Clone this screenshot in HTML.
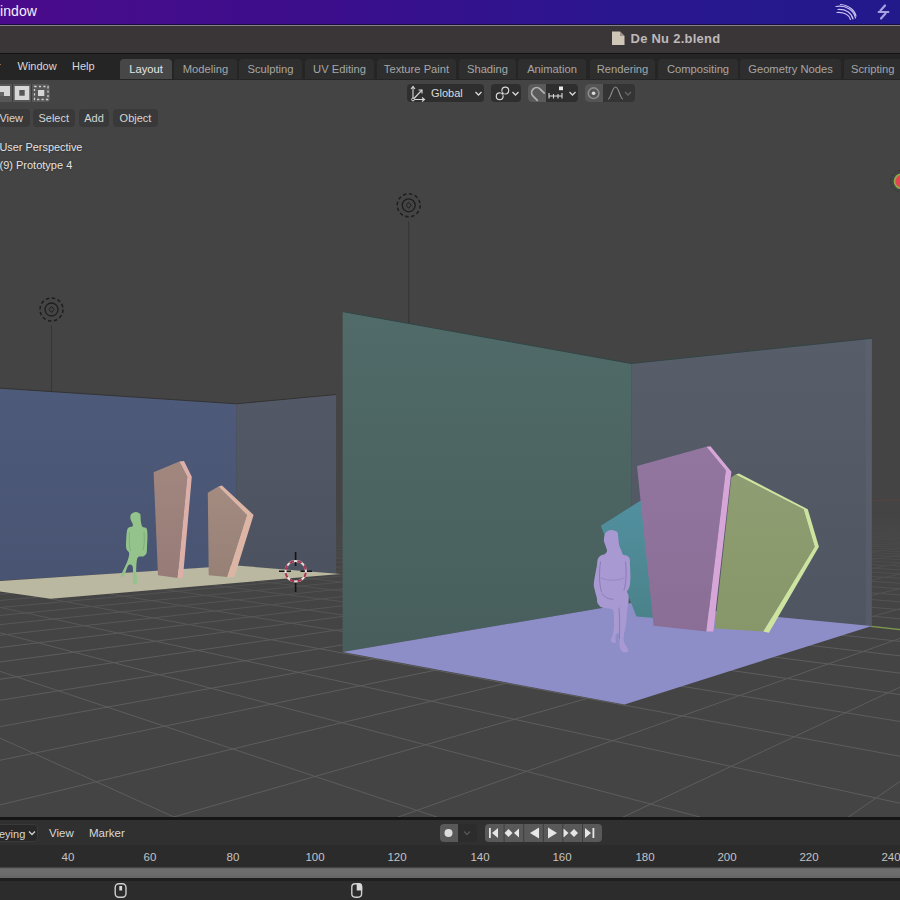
<!DOCTYPE html>
<html><head><meta charset="utf-8"><style>
*{box-sizing:border-box}
body{margin:0;width:900px;height:900px;overflow:hidden;background:#444444;font-family:"Liberation Sans",sans-serif;position:relative;color:#ddd}
.a{position:absolute}
.t{position:absolute;white-space:nowrap;font-size:11px;line-height:14px}
.tab{position:absolute;top:59px;height:20px;background:#2e2e2e;border-radius:4px 4px 0 0;color:#a6a6a6;font-size:11.2px;line-height:21px;text-align:center}
.btn{position:absolute;height:18px;background:#393939;border-radius:4px;color:#d6d6d6;font-size:11px;line-height:18px;text-align:center}
</style></head><body>
<svg class="a" style="left:0;top:0" width="900" height="900" viewBox="0 0 900 900"><defs><linearGradient id="gBlue" x1="0" y1="0" x2="0" y2="1"><stop offset="0" stop-color="#4e5a79"/><stop offset="1" stop-color="#485472"/></linearGradient><linearGradient id="gGrayL" x1="0" y1="0" x2="0" y2="1"><stop offset="0" stop-color="#535867"/><stop offset="1" stop-color="#4d5260"/></linearGradient><linearGradient id="gTeal" x1="0" y1="0" x2="0" y2="1"><stop offset="0" stop-color="#506b69"/><stop offset="1" stop-color="#475e5c"/></linearGradient><linearGradient id="gGrayR" x1="0" y1="0" x2="0" y2="1"><stop offset="0" stop-color="#575d69"/><stop offset="1" stop-color="#4f5561"/></linearGradient><linearGradient id="gS1" x1="0" y1="0" x2="0" y2="1"><stop offset="0" stop-color="#a2877f"/><stop offset="1" stop-color="#977b77"/></linearGradient><linearGradient id="gS2" x1="0" y1="0" x2="0" y2="1"><stop offset="0" stop-color="#a38b80"/><stop offset="1" stop-color="#978076"/></linearGradient><linearGradient id="gTS" x1="0" y1="0" x2="0" y2="1"><stop offset="0" stop-color="#5290a0"/><stop offset="1" stop-color="#4a8289"/></linearGradient><linearGradient id="gPS" x1="0" y1="0" x2="0" y2="1"><stop offset="0" stop-color="#9276a0"/><stop offset="1" stop-color="#8b6e95"/></linearGradient><linearGradient id="gGS" x1="0" y1="0" x2="0" y2="1"><stop offset="0" stop-color="#8f9e72"/><stop offset="1" stop-color="#889769"/></linearGradient></defs><rect x="0" y="54" width="900" height="763" fill="#444444"/><defs><linearGradient id="gf" gradientUnits="userSpaceOnUse" x1="599.9" y1="512.3" x2="600.1" y2="651.4"><stop offset="0" stop-color="#fff" stop-opacity="0"/><stop offset="1" stop-color="#fff" stop-opacity="1"/></linearGradient><mask id="gm"><rect x="0" y="0" width="900" height="900" fill="url(#gf)"/></mask></defs><g stroke="#5d5d5d" stroke-width="1" mask="url(#gm)"><line x1="894.8" y1="507.6" x2="905.0" y2="507.8"/><line x1="877.3" y1="507.6" x2="905.0" y2="508.0"/><line x1="859.8" y1="507.7" x2="905.0" y2="508.3"/><line x1="842.3" y1="507.7" x2="905.0" y2="508.6"/><line x1="824.8" y1="507.7" x2="905.0" y2="508.9"/><line x1="807.3" y1="507.7" x2="905.0" y2="509.2"/><line x1="789.8" y1="507.7" x2="905.0" y2="509.5"/><line x1="772.3" y1="507.8" x2="905.0" y2="509.8"/><line x1="754.9" y1="507.8" x2="905.0" y2="510.2"/><line x1="737.4" y1="507.8" x2="905.0" y2="510.5"/><line x1="719.9" y1="507.8" x2="905.0" y2="510.8"/><line x1="702.4" y1="507.8" x2="905.0" y2="511.2"/><line x1="684.9" y1="507.8" x2="905.0" y2="511.5"/><line x1="667.4" y1="507.9" x2="905.0" y2="511.9"/><line x1="649.9" y1="507.9" x2="905.0" y2="512.3"/><line x1="632.4" y1="507.9" x2="905.0" y2="512.7"/><line x1="614.9" y1="507.9" x2="905.0" y2="513.1"/><line x1="597.4" y1="507.9" x2="905.0" y2="513.5"/><line x1="579.9" y1="507.9" x2="905.0" y2="514.0"/><line x1="562.4" y1="508.0" x2="905.0" y2="514.4"/><line x1="545.0" y1="508.0" x2="905.0" y2="514.9"/><line x1="527.5" y1="508.0" x2="905.0" y2="515.3"/><line x1="510.0" y1="508.0" x2="905.0" y2="515.8"/><line x1="492.5" y1="508.0" x2="905.0" y2="516.3"/><line x1="475.0" y1="508.1" x2="905.0" y2="516.9"/><line x1="457.5" y1="508.1" x2="905.0" y2="517.4"/><line x1="440.0" y1="508.1" x2="905.0" y2="518.0"/><line x1="422.5" y1="508.1" x2="905.0" y2="518.5"/><line x1="405.0" y1="508.1" x2="905.0" y2="519.1"/><line x1="387.5" y1="508.1" x2="905.0" y2="519.8"/><line x1="370.0" y1="508.2" x2="905.0" y2="520.4"/><line x1="352.5" y1="508.2" x2="905.0" y2="521.1"/><line x1="335.1" y1="508.2" x2="905.0" y2="521.8"/><line x1="317.6" y1="508.2" x2="905.0" y2="522.5"/><line x1="300.1" y1="508.2" x2="905.0" y2="523.3"/><line x1="282.6" y1="508.3" x2="905.0" y2="524.1"/><line x1="265.1" y1="508.3" x2="905.0" y2="524.9"/><line x1="247.6" y1="508.3" x2="905.0" y2="525.7"/><line x1="230.1" y1="508.3" x2="905.0" y2="526.6"/><line x1="212.6" y1="508.3" x2="905.0" y2="527.6"/><line x1="195.1" y1="508.3" x2="905.0" y2="528.6"/><line x1="177.6" y1="508.4" x2="905.0" y2="529.6"/><line x1="160.1" y1="508.4" x2="905.0" y2="530.7"/><line x1="142.6" y1="508.4" x2="905.0" y2="531.8"/><line x1="125.2" y1="508.4" x2="905.0" y2="533.0"/><line x1="107.7" y1="508.4" x2="905.0" y2="534.3"/><line x1="90.2" y1="508.4" x2="905.0" y2="535.6"/><line x1="72.7" y1="508.5" x2="905.0" y2="537.0"/><line x1="55.2" y1="508.5" x2="905.0" y2="538.5"/><line x1="37.7" y1="508.5" x2="905.0" y2="540.0"/><line x1="20.2" y1="508.5" x2="905.0" y2="541.7"/><line x1="2.7" y1="508.5" x2="905.0" y2="543.5"/><line x1="-5.0" y1="508.9" x2="905.0" y2="545.3"/><line x1="-5.0" y1="509.7" x2="905.0" y2="547.4"/><line x1="-5.0" y1="510.5" x2="905.0" y2="549.5"/><line x1="-5.0" y1="511.4" x2="905.0" y2="551.8"/><line x1="-5.0" y1="512.3" x2="905.0" y2="554.3"/><line x1="-5.0" y1="513.3" x2="905.0" y2="556.9"/><line x1="-5.0" y1="514.4" x2="905.0" y2="559.8"/><line x1="-5.0" y1="515.6" x2="905.0" y2="563.0"/><line x1="-5.0" y1="516.8" x2="905.0" y2="566.4"/><line x1="-5.0" y1="518.2" x2="905.0" y2="570.1"/><line x1="-5.0" y1="519.8" x2="905.0" y2="574.1"/><line x1="-5.0" y1="521.5" x2="905.0" y2="578.6"/><line x1="-5.0" y1="523.3" x2="905.0" y2="583.6"/><line x1="-5.0" y1="525.4" x2="905.0" y2="589.1"/><line x1="-5.0" y1="527.7" x2="905.0" y2="595.3"/><line x1="-5.0" y1="530.3" x2="905.0" y2="602.2"/><line x1="-5.0" y1="533.3" x2="905.0" y2="610.1"/><line x1="-5.0" y1="536.7" x2="905.0" y2="619.2"/><line x1="-5.0" y1="540.6" x2="905.0" y2="629.6"/><line x1="-5.0" y1="545.2" x2="905.0" y2="641.9"/><line x1="-5.0" y1="550.7" x2="905.0" y2="656.4"/><line x1="-5.0" y1="557.2" x2="905.0" y2="673.8"/><line x1="-5.0" y1="565.3" x2="905.0" y2="695.3"/><line x1="-5.0" y1="575.4" x2="905.0" y2="722.3"/><line x1="-5.0" y1="588.6" x2="905.0" y2="757.2"/><line x1="-5.0" y1="606.3" x2="905.0" y2="804.3"/><line x1="-5.0" y1="631.4" x2="707.5" y2="819.0"/><line x1="-5.0" y1="669.7" x2="442.7" y2="819.0"/><line x1="-5.0" y1="735.8" x2="178.3" y2="819.0"/><line x1="5.5" y1="508.5" x2="-5.0" y2="508.7"/><line x1="20.5" y1="508.5" x2="-5.0" y2="509.0"/><line x1="35.6" y1="508.5" x2="-5.0" y2="509.2"/><line x1="50.6" y1="508.5" x2="-5.0" y2="509.5"/><line x1="65.6" y1="508.5" x2="-5.0" y2="509.8"/><line x1="80.7" y1="508.5" x2="-5.0" y2="510.1"/><line x1="95.7" y1="508.4" x2="-5.0" y2="510.3"/><line x1="110.7" y1="508.4" x2="-5.0" y2="510.6"/><line x1="125.8" y1="508.4" x2="-5.0" y2="510.9"/><line x1="140.8" y1="508.4" x2="-5.0" y2="511.2"/><line x1="155.9" y1="508.4" x2="-5.0" y2="511.6"/><line x1="170.9" y1="508.4" x2="-5.0" y2="511.9"/><line x1="185.9" y1="508.3" x2="-5.0" y2="512.2"/><line x1="201.0" y1="508.3" x2="-5.0" y2="512.6"/><line x1="216.0" y1="508.3" x2="-5.0" y2="512.9"/><line x1="231.0" y1="508.3" x2="-5.0" y2="513.3"/><line x1="246.1" y1="508.3" x2="-5.0" y2="513.7"/><line x1="261.1" y1="508.3" x2="-5.0" y2="514.0"/><line x1="276.1" y1="508.3" x2="-5.0" y2="514.4"/><line x1="291.2" y1="508.2" x2="-5.0" y2="514.8"/><line x1="306.2" y1="508.2" x2="-5.0" y2="515.3"/><line x1="321.2" y1="508.2" x2="-5.0" y2="515.7"/><line x1="336.3" y1="508.2" x2="-5.0" y2="516.1"/><line x1="351.3" y1="508.2" x2="-5.0" y2="516.6"/><line x1="366.4" y1="508.2" x2="-5.0" y2="517.0"/><line x1="381.4" y1="508.2" x2="-5.0" y2="517.5"/><line x1="396.4" y1="508.1" x2="-5.0" y2="518.0"/><line x1="411.5" y1="508.1" x2="-5.0" y2="518.5"/><line x1="426.5" y1="508.1" x2="-5.0" y2="519.1"/><line x1="441.5" y1="508.1" x2="-5.0" y2="519.6"/><line x1="456.6" y1="508.1" x2="-5.0" y2="520.2"/><line x1="471.6" y1="508.1" x2="-5.0" y2="520.8"/><line x1="486.6" y1="508.0" x2="-5.0" y2="521.4"/><line x1="501.7" y1="508.0" x2="-5.0" y2="522.0"/><line x1="516.7" y1="508.0" x2="-5.0" y2="522.7"/><line x1="531.8" y1="508.0" x2="-5.0" y2="523.4"/><line x1="546.8" y1="508.0" x2="-5.0" y2="524.1"/><line x1="561.8" y1="508.0" x2="-5.0" y2="524.8"/><line x1="576.9" y1="508.0" x2="-5.0" y2="525.6"/><line x1="591.9" y1="507.9" x2="-5.0" y2="526.4"/><line x1="606.9" y1="507.9" x2="-5.0" y2="527.2"/><line x1="622.0" y1="507.9" x2="-5.0" y2="528.1"/><line x1="637.0" y1="507.9" x2="-5.0" y2="529.0"/><line x1="652.0" y1="507.9" x2="-5.0" y2="529.9"/><line x1="667.1" y1="507.9" x2="-5.0" y2="530.9"/><line x1="682.1" y1="507.8" x2="-5.0" y2="531.9"/><line x1="697.1" y1="507.8" x2="-5.0" y2="533.0"/><line x1="712.2" y1="507.8" x2="-5.0" y2="534.1"/><line x1="727.2" y1="507.8" x2="-5.0" y2="535.3"/><line x1="742.3" y1="507.8" x2="-5.0" y2="536.6"/><line x1="757.3" y1="507.8" x2="-5.0" y2="537.9"/><line x1="772.3" y1="507.8" x2="-5.0" y2="539.3"/><line x1="787.4" y1="507.7" x2="-5.0" y2="540.7"/><line x1="802.4" y1="507.7" x2="-5.0" y2="542.3"/><line x1="817.4" y1="507.7" x2="-5.0" y2="543.9"/><line x1="832.5" y1="507.7" x2="-5.0" y2="545.7"/><line x1="847.5" y1="507.7" x2="-5.0" y2="547.5"/><line x1="862.5" y1="507.7" x2="-5.0" y2="549.5"/><line x1="877.6" y1="507.6" x2="-5.0" y2="551.5"/><line x1="892.6" y1="507.6" x2="-5.0" y2="553.8"/><line x1="905.0" y1="507.8" x2="-5.0" y2="556.2"/><line x1="905.0" y1="508.6" x2="-5.0" y2="558.7"/><line x1="905.0" y1="509.5" x2="-5.0" y2="561.5"/><line x1="905.0" y1="510.4" x2="-5.0" y2="564.5"/><line x1="905.0" y1="511.4" x2="-5.0" y2="567.7"/><line x1="905.0" y1="512.6" x2="-5.0" y2="571.2"/><line x1="905.0" y1="513.8" x2="-5.0" y2="575.1"/><line x1="905.0" y1="515.1" x2="-5.0" y2="579.3"/><line x1="905.0" y1="516.6" x2="-5.0" y2="583.9"/><line x1="905.0" y1="518.2" x2="-5.0" y2="589.0"/><line x1="905.0" y1="520.0" x2="-5.0" y2="594.6"/><line x1="905.0" y1="522.0" x2="-5.0" y2="600.9"/><line x1="905.0" y1="524.3" x2="-5.0" y2="608.0"/><line x1="905.0" y1="526.8" x2="-5.0" y2="616.0"/><line x1="905.0" y1="529.8" x2="-5.0" y2="625.2"/><line x1="905.0" y1="533.1" x2="-5.0" y2="635.8"/><line x1="905.0" y1="537.0" x2="-5.0" y2="648.1"/><line x1="905.0" y1="541.7" x2="-5.0" y2="662.6"/><line x1="905.0" y1="547.2" x2="-5.0" y2="680.0"/><line x1="905.0" y1="554.0" x2="-5.0" y2="701.1"/><line x1="905.0" y1="562.4" x2="-5.0" y2="727.5"/><line x1="905.0" y1="573.1" x2="-5.0" y2="761.3"/><line x1="905.0" y1="587.4" x2="-5.0" y2="806.1"/><line x1="905.0" y1="607.2" x2="166.8" y2="819.0"/><line x1="905.0" y1="636.6" x2="392.7" y2="819.0"/><line x1="905.0" y1="684.8" x2="618.9" y2="819.0"/><line x1="905.0" y1="778.0" x2="845.5" y2="819.0"/></g><line x1="871" y1="626.3" x2="900" y2="629.6" stroke="#7f9a48" stroke-width="1.2"/><line x1="872" y1="500.5" x2="900" y2="500" stroke="#6a4444" stroke-width="0.8" stroke-opacity="0.6"/><g fill="none" stroke="#1e1e1e"><line x1="408.7" y1="221.3" x2="408.7" y2="328" stroke="#333333" stroke-width="0.9"/><circle cx="408.7" cy="205.3" r="6.5" stroke-width="1.3"/><circle cx="408.7" cy="205.3" r="11.5" stroke-width="1.5" stroke-dasharray="3.5 2.5"/><path d="M408.7 202.3L411.2 205.3L408.7 208.3L406.2 205.3Z" stroke-width="1"/></g><g fill="none" stroke="#1e1e1e"><line x1="51.5" y1="325.5" x2="51.5" y2="395" stroke="#333333" stroke-width="0.9"/><circle cx="51.5" cy="309.5" r="6.5" stroke-width="1.3"/><circle cx="51.5" cy="309.5" r="11.5" stroke-width="1.5" stroke-dasharray="3.5 2.5"/><path d="M51.5 306.5L54.0 309.5L51.5 312.5L49.0 309.5Z" stroke-width="1"/></g><polygon points="-40.0,385.5 236.4,403.8 236.4,566.0 -40.0,583.0" fill="url(#gBlue)" /><polygon points="236.4,403.8 336.0,394.5 336.0,573.5 236.4,566.0" fill="url(#gGrayL)" /><path d="M-40 385.5L236.4 403.8L336 394.5" fill="none" stroke="#333" stroke-width="1"/><polygon points="-40.0,583.5 236.4,565.5 340.5,574.0 50.7,598.7 -40.0,586.0" fill="#bab8a0" /><polygon points="342.7,311.6 631.2,363.5 631.2,603.0 342.6,652.0" fill="url(#gTeal)" /><polygon points="631.2,363.5 871.8,338.3 871.8,626.0 631.2,603.0" fill="url(#gGrayR)" /><rect x="866" y="339" width="5.8" height="287" fill="#636a76" opacity="0.3"/><path d="M342.7 311.6L631.2 363.5L871.8 338.3" fill="none" stroke="#344" stroke-width="1"/><polygon points="342.6,652.0 631.2,603.0 871.8,626.0 624.5,704.4" fill="#8d8ec8" /><polygon points="153.6,472.2 179.3,461.6 187.3,476.7 177.6,578.0 158.0,575.3" fill="url(#gS1)" /><polygon points="179.3,461.6 184.0,461.0 191.8,476.7 182.9,578.0 177.6,578.0 187.3,476.7" fill="#dcb0a8" /><polygon points="207.8,492.7 218.4,486.4 246.9,514.9 227.3,577.1 208.7,575.3" fill="url(#gS2)" /><polygon points="218.4,486.4 222.0,485.5 253.6,514.9 234.4,577.1 227.3,577.1 246.9,514.9" fill="#dcb5a5" /><polygon points="600.9,525.8 640.0,500.9 660.0,500.0 660.0,618.5 636.4,616.4" fill="url(#gTS)" /><polygon points="637.0,466.1 706.4,446.7 725.8,470.3 706.4,631.4 653.6,625.8" fill="url(#gPS)" /><polygon points="706.4,446.7 710.5,446.2 731.4,471.7 713.3,631.4 706.4,631.4 725.8,470.3" fill="#d6a6d8" /><polygon points="731.4,477.2 735.6,474.4 803.6,509.2 814.7,546.7 763.3,631.4 714.7,628.6" fill="url(#gGS)" /><polygon points="735.6,474.4 739.0,473.5 807.8,509.2 818.9,546.7 768.9,632.8 763.3,631.4 814.7,546.7 803.6,509.2" fill="#cde3a0" /><path d="M611.3 530.1C612.7 530.2 615.4 530.8 616.5 531.5C617.6 532.2 617.5 532.1 617.9 534.3C618.3 536.4 618.5 541.7 619.1 544.4C619.7 547.1 620.8 549.0 621.4 550.7C622.0 552.4 622.1 553.7 623.0 554.5C623.9 555.3 625.8 555.1 626.9 555.7C628.0 556.4 629.1 556.8 629.6 558.4C630.1 560.0 629.9 562.5 630.0 565.4C630.1 568.2 630.4 572.4 630.4 575.5C630.4 578.6 630.3 581.8 630.0 584.1C629.7 586.4 628.9 588.3 628.4 589.5C627.9 590.7 626.9 590.1 626.9 591.2C626.9 592.3 628.4 594.0 628.6 596.0C628.9 598.0 628.6 600.6 628.4 602.9C628.2 605.2 627.6 606.5 627.2 610.0C626.8 613.5 626.7 619.4 626.1 623.9C625.5 628.4 623.9 633.8 623.6 637.0C623.3 640.2 623.7 640.8 624.5 643.0C625.3 645.2 628.1 649.0 628.4 650.5C628.6 652.0 627.1 652.1 626.0 652.2C624.9 652.3 622.6 652.2 621.5 651.0C620.4 649.8 619.8 647.2 619.5 645.0C619.2 642.8 620.0 640.0 619.8 638.0C619.5 636.0 618.7 633.3 618.0 633.0C617.3 632.7 615.9 634.4 615.5 636.0C615.1 637.6 616.1 641.5 615.6 642.5C615.1 643.5 613.0 642.7 612.2 642.2C611.4 641.7 610.7 640.9 610.8 639.5C610.9 638.1 612.5 636.4 613.0 634.0C613.5 631.6 613.9 628.7 614.0 625.0C614.1 621.3 614.0 614.6 613.5 612.0C613.0 609.4 613.2 609.8 611.3 609.1C609.4 608.4 604.3 608.6 602.0 607.6C599.7 606.6 598.4 604.6 597.5 603.0C596.6 601.4 597.4 600.5 596.9 598.2C596.4 596.0 595.1 591.9 594.6 589.5C594.1 587.1 593.7 586.4 593.8 584.1C593.9 581.8 594.5 578.6 595.0 575.5C595.5 572.4 596.4 568.1 596.9 565.4C597.4 562.7 597.1 560.8 597.7 559.2C598.3 557.6 599.2 556.6 600.4 555.7C601.6 554.8 603.9 554.8 605.0 554.0C606.1 553.2 606.9 551.9 607.0 550.7C607.1 549.5 606.4 548.5 605.9 546.8C605.4 545.1 604.0 542.8 603.9 540.6C603.8 538.4 604.4 535.2 605.1 533.6C605.8 532.0 607.0 531.6 608.0 531.0C609.0 530.4 609.9 530.0 611.3 530.1Z" fill="#a899d2"/><g fill="none" stroke="#7f70ac" stroke-width="0.9" stroke-opacity="0.8" stroke-linecap="round"><path d="M600.5 562C599 572 599 584 601.5 592"/><path d="M625.5 562C626.5 572 626.5 582 624 590"/><path d="M602 594C606 598 610 600 613 599"/><path d="M619 608C620 620 619.5 630 619.5 638"/><path d="M601 578C608 581 617 581 624 578" stroke-opacity="0.45"/></g><path d="M135.8 512.1C137.2 512.0 138.7 513.0 139.5 513.5C140.3 514.0 140.3 514.1 140.5 515.4C140.7 516.7 140.6 519.6 140.9 521.5C141.2 523.4 141.5 525.5 142.4 526.7C143.3 527.9 145.8 527.0 146.6 528.6C147.4 530.2 147.4 533.4 147.5 536.1C147.6 538.8 147.2 541.8 147.1 544.6C146.9 547.4 147.2 551.1 146.6 553.1C146.0 555.1 144.8 555.6 143.3 556.4C141.8 557.2 138.8 555.4 137.6 557.8C136.4 560.2 136.3 566.9 136.2 571.0C136.1 575.1 137.7 580.3 137.2 582.4C136.7 584.5 134.1 584.8 133.4 583.8C132.7 582.8 133.1 579.6 132.9 576.7C132.8 573.8 133.3 568.2 132.5 566.3C131.7 564.4 129.5 563.9 128.2 565.4C126.8 566.9 125.6 573.4 124.4 575.3C123.2 577.2 121.5 577.1 121.1 576.7C120.7 576.3 121.1 575.4 122.1 572.9C123.1 570.4 126.1 564.9 127.3 561.6C128.5 558.3 129.4 555.3 129.2 553.1C129.0 550.9 126.8 550.9 126.3 548.4C125.8 545.9 126.1 541.3 126.3 538.0C126.5 534.7 126.7 530.6 127.7 528.6C128.7 526.6 131.7 527.1 132.5 526.2C133.3 525.3 132.8 524.6 132.5 523.4C132.2 522.2 130.8 520.7 130.6 519.2C130.3 517.7 130.1 515.6 131.0 514.4C131.9 513.2 134.4 512.2 135.8 512.1Z" fill="#94c48c"/><g fill="none" stroke="#6f9a6a" stroke-width="0.7" stroke-opacity="0.8"><path d="M129.5 532C129 539 129 546 130.5 551"/><path d="M144 532C144.5 539 144.5 545 143 550"/></g><g stroke="#151515" stroke-width="1.6"><path d="M295.6 552V566M295.6 581.5V592M279 571.3H291M300.5 571.3H312"/></g><circle cx="295.7" cy="571.3" r="10.2" fill="none" stroke="#e8e0e0" stroke-width="2"/><circle cx="295.7" cy="571.3" r="10.2" fill="none" stroke="#a5344e" stroke-width="2.1" stroke-dasharray="4.6 3.4" transform="rotate(8 295.7 571.3)"/><circle cx="901.5" cy="181.3" r="11" fill="none" stroke="#333" stroke-width="1" stroke-dasharray="2 2"/><circle cx="901.5" cy="181.3" r="7" fill="#e24452" stroke="#8fa848" stroke-width="1.8"/></svg>
<div class="a" style="left:0;top:0;width:900px;height:24px;background:linear-gradient(90deg,#4a0b8b,#3c0e8c 35%,#2a1790 70%,#22198b)"></div>
<div class="t" style="left:0px;top:3px;color:#f4f0ff;font-size:14px;line-height:17px;letter-spacing:0.1px">indow</div>
<div class="a" style="left:0;top:24px;width:900px;height:1px;background:#1a0f38"></div>
<div class="a" style="left:0;top:25px;width:900px;height:28px;background:#3a3537;border-top:1px solid #85818a"></div>
<div class="t" style="left:630.5px;top:32px;color:#bdb9b9;font-size:13px;font-weight:bold;letter-spacing:0.25px">De Nu 2.blend</div>
<div class="a" style="left:0;top:53px;width:900px;height:1px;background:#121212"></div>
<div class="a" style="left:0;top:54px;width:900px;height:25.5px;background:#252525"></div>
<div class="t" style="left:-3px;top:59px;color:#d8d8d8;font-size:11px">r</div>
<div class="t" style="left:17.5px;top:59px;color:#d8d8d8;font-size:11px">Window</div>
<div class="t" style="left:72px;top:59px;color:#d8d8d8;font-size:11px">Help</div>
<div class="tab" style="left:120px;width:52px;background:#474747;color:#e6e6e6">Layout</div>
<div class="tab" style="left:174px;width:63px">Modeling</div>
<div class="tab" style="left:239px;width:63px">Sculpting</div>
<div class="tab" style="left:305px;width:69px">UV Editing</div>
<div class="tab" style="left:377px;width:79px">Texture Paint</div>
<div class="tab" style="left:459px;width:57px">Shading</div>
<div class="tab" style="left:518px;width:68px">Animation</div>
<div class="tab" style="left:590px;width:65px">Rendering</div>
<div class="tab" style="left:658px;width:80px">Compositing</div>
<div class="tab" style="left:740px;width:101px">Geometry Nodes</div>
<div class="tab" style="left:844px;width:70px;text-align:left;padding-left:7px">Scripting</div>
<!-- viewport header -->
<div class="btn" style="left:406.5px;top:84px;width:77.5px;background:#2e2e2e"></div>
<div class="t" style="left:431px;top:85px;color:#dcdcdc;font-size:11px;line-height:17px">Global</div>
<div class="btn" style="left:491px;top:84px;width:30px;background:#2e2e2e"></div>
<div class="btn" style="left:528px;top:84px;width:50px;background:#2e2e2e"></div>
<div class="a" style="left:528px;top:84px;width:18px;height:18px;background:#5a5a5a;border-radius:4px 0 0 4px"></div>
<div class="btn" style="left:585px;top:84px;width:50px;background:#343434"></div>
<div class="a" style="left:585px;top:84px;width:18px;height:18px;background:#555;border-radius:4px 0 0 4px"></div>
<div class="btn" style="left:-10px;top:108.8px;width:39.5px;padding-left:3px">View</div>
<div class="btn" style="left:32.5px;top:108.8px;width:42.5px">Select</div>
<div class="btn" style="left:79px;top:108.8px;width:30px">Add</div>
<div class="btn" style="left:113px;top:108.8px;width:45px">Object</div>
<div class="t" style="left:-0.5px;top:139.6px;color:#e4e4e4;font-size:10.9px;text-shadow:0 0 2px #222">User Perspective</div>
<div class="t" style="left:-0.5px;top:157.6px;color:#e4e4e4;font-size:11px;text-shadow:0 0 2px #222">(9) Prototype 4</div>
<!-- timeline -->
<div class="a" style="left:0;top:817px;width:900px;height:3px;background:#161616"></div>
<div class="a" style="left:0;top:820px;width:900px;height:25px;background:#303030"></div>
<div class="btn" style="left:-10px;top:824px;width:48px;background:#282828;text-align:left;padding-left:8px;color:#d8d8d8;border:1px solid #3a3a3a">eying</div>
<div class="t" style="left:49px;top:826px;color:#d8d8d8;font-size:11.5px">View</div>
<div class="t" style="left:89px;top:826px;color:#d8d8d8;font-size:11.5px">Marker</div>
<div class="btn" style="left:440px;top:824px;width:37px;background:#2c2c2c"></div>
<div class="a" style="left:440px;top:824px;width:18px;height:18px;background:#595959;border-radius:4px 0 0 4px"></div>
<div class="a" style="left:484.5px;top:824px;width:117.5px;height:18px;background:#595959;border-radius:4px"></div>
<div class="a" style="left:0;top:845px;width:900px;height:22px;background:#2b2b2b"></div>
<div class="t" style="left:48px;top:851px;width:40px;text-align:center;color:#c4c4c4;font-size:11.5px;line-height:12px">40</div><div class="t" style="left:130px;top:851px;width:40px;text-align:center;color:#c4c4c4;font-size:11.5px;line-height:12px">60</div><div class="t" style="left:213px;top:851px;width:40px;text-align:center;color:#c4c4c4;font-size:11.5px;line-height:12px">80</div><div class="t" style="left:295px;top:851px;width:40px;text-align:center;color:#c4c4c4;font-size:11.5px;line-height:12px">100</div><div class="t" style="left:377px;top:851px;width:40px;text-align:center;color:#c4c4c4;font-size:11.5px;line-height:12px">120</div><div class="t" style="left:460px;top:851px;width:40px;text-align:center;color:#c4c4c4;font-size:11.5px;line-height:12px">140</div><div class="t" style="left:542px;top:851px;width:40px;text-align:center;color:#c4c4c4;font-size:11.5px;line-height:12px">160</div><div class="t" style="left:625px;top:851px;width:40px;text-align:center;color:#c4c4c4;font-size:11.5px;line-height:12px">180</div><div class="t" style="left:707px;top:851px;width:40px;text-align:center;color:#c4c4c4;font-size:11.5px;line-height:12px">200</div><div class="t" style="left:789px;top:851px;width:40px;text-align:center;color:#c4c4c4;font-size:11.5px;line-height:12px">220</div><div class="t" style="left:871px;top:851px;width:40px;text-align:center;color:#c4c4c4;font-size:11.5px;line-height:12px">240</div>
<div class="a" style="left:0;top:867.5px;width:900px;height:11px;background:linear-gradient(#5c5c5c 0,#6e6e6e 12%,#6c6c6c 55%,#626262 100%)"></div>
<div class="a" style="left:0;top:878px;width:900px;height:3px;background:#1f1f1f"></div>
<div class="a" style="left:0;top:881px;width:900px;height:19px;background:#2c2c2c"></div>
<svg class="a" style="left:0;top:0;pointer-events:none" width="900" height="900"><g fill="none" stroke="#c8c0f0" stroke-width="1.2" stroke-linecap="round"><path d="M836 6.5 C846 5 854 10 855.5 18"/><path d="M838 9.5 C846 9 851.5 13 853 19"/><path d="M837 12.5 C844 12 849 15 850.5 19.5"/><path d="M840.5 4.5 C849 5 855 11 856 16"/></g><g fill="none" stroke="#a9a2e0" stroke-width="2.2" stroke-linecap="round"><path d="M885 5.5L880.5 10.5"/><path d="M885.5 13.5L881 18.5"/><path d="M878.5 12L888.5 12" stroke-width="1.8"/></g><path d="M612 31.5H620L624.5 36V45H612Z" fill="#cfc6b8"/><path d="M620 31.5V36H624.5" fill="#9a9286"/><rect x="-6" y="84" width="56" height="18" rx="3" fill="#575757"/><line x1="12.5" y1="84" x2="12.5" y2="102" stroke="#3c3c3c"/><line x1="31.5" y1="84" x2="31.5" y2="102" stroke="#3c3c3c"/><path d="M0 86H10V96H4V92H0Z" fill="#d6d6d6"/><rect x="0" y="92" width="4" height="4" fill="#666"/><rect x="14.7" y="86" width="14.6" height="14" fill="#d6d6d6"/><rect x="19.3" y="90" width="5.4" height="5.7" fill="#555"/><rect x="34.5" y="86.5" width="13.5" height="13" fill="none" stroke="#d0d0d0" stroke-width="1.3" stroke-dasharray="2.2 2.2"/><rect x="38" y="90" width="6.3" height="6" fill="#d6d6d6"/><g fill="none" stroke="#d8d8d8" stroke-width="1.1"><path d="M413 87V99.5H424"/><path d="M411 89L413 86.5L415 89"/><path d="M422 97.5L424.5 99.5L422 101.5"/><path d="M413.5 99L422 90"/><path d="M418.5 90H422V93.5"/></g><circle cx="413" cy="99.5" r="1.4" fill="#2e2e2e" stroke="#d8d8d8" stroke-width="1"/><path d="M475.5 92.0L478.5 95.0L481.5 92.0" fill="none" stroke="#d8d8d8" stroke-width="1.3"/><g fill="none" stroke="#d8d8d8" stroke-width="1.2"><circle cx="505.3" cy="90.6" r="3.4"/><circle cx="499.7" cy="96.2" r="3.4"/></g><circle cx="502.5" cy="93.4" r="1.6" fill="#e4e4e4" stroke="#2e2e2e" stroke-width="0.8"/><path d="M512.5 92.0L515.5 95.0L518.5 92.0" fill="none" stroke="#d8d8d8" stroke-width="1.3"/><g transform="rotate(-45 537 93)"><path d="M532 99V92.5A5 5 0 0 1 542 92.5V99" fill="none" stroke="#b0b0b0" stroke-width="1.8"/></g><g stroke="#dadada" stroke-width="1.1"><path d="M549 93V98.6M553.5 94V98.6M558 94V98.6M562 93V98.6M549 96H562"/></g><rect x="559" y="86.5" width="4" height="3.7" fill="#e8e8e8"/><path d="M569.5 92.0L572.5 95.0L575.5 92.0" fill="none" stroke="#d8d8d8" stroke-width="1.3"/><circle cx="593.6" cy="93.2" r="5.3" fill="none" stroke="#8c8c8c" stroke-width="1.6"/><circle cx="593.6" cy="93.2" r="1.8" fill="#dedede"/><path d="M608 99C611 99 612 87 615.5 87C619 87 620 99 623 99" fill="none" stroke="#8e8e8e" stroke-width="1.2"/><path d="M625 92.0L628 95.0L631 92.0" fill="none" stroke="#666" stroke-width="1.3"/><path d="M29 831.5L32 834.5L35 831.5" fill="none" stroke="#d0d0d0" stroke-width="1.3"/><circle cx="448.5" cy="833" r="4" fill="#dcdcdc"/><path d="M464 831.5L467 834.5L470 831.5" fill="none" stroke="#555" stroke-width="1.3"/><line x1="504.1" y1="824" x2="504.1" y2="842" stroke="#3e3e3e"/><line x1="523.7" y1="824" x2="523.7" y2="842" stroke="#3e3e3e"/><line x1="543.3" y1="824" x2="543.3" y2="842" stroke="#3e3e3e"/><line x1="562.9" y1="824" x2="562.9" y2="842" stroke="#3e3e3e"/><line x1="582.5" y1="824" x2="582.5" y2="842" stroke="#3e3e3e"/><g fill="#e6e6e6"><rect x="489" y="828" width="1.8" height="10"/><path d="M498 828V838L492 833Z"/><path d="M504.5 833L508.5 829L512.5 833L508.5 837Z"/><path d="M519 828.5V837.5L514 833Z"/><path d="M539 827.5V838.5L530 833Z"/><path d="M548 827.5V838.5L557 833Z"/><path d="M563.5 828.5V837.5L568.5 833Z"/><path d="M570 833L574 829L578 833L574 837Z"/><path d="M585 828V838L591 833Z"/><rect x="592.5" y="828" width="1.8" height="10"/></g><rect x="115.2" y="883.8" width="10.8" height="13.4" rx="3.6" fill="none" stroke="#cfcfcf" stroke-width="1.4"/><rect x="119.3" y="886" width="2.8" height="4.5" fill="#d8d8d8"/><rect x="351.8" y="883.8" width="9.8" height="13.4" rx="3.4" fill="none" stroke="#cfcfcf" stroke-width="1.4"/><path d="M356.7 883.1H358.6A3.6 3.6 0 0 1 362.2 886.7V890.5H356.7Z" fill="#d8d8d8"/></svg>
</body></html>
